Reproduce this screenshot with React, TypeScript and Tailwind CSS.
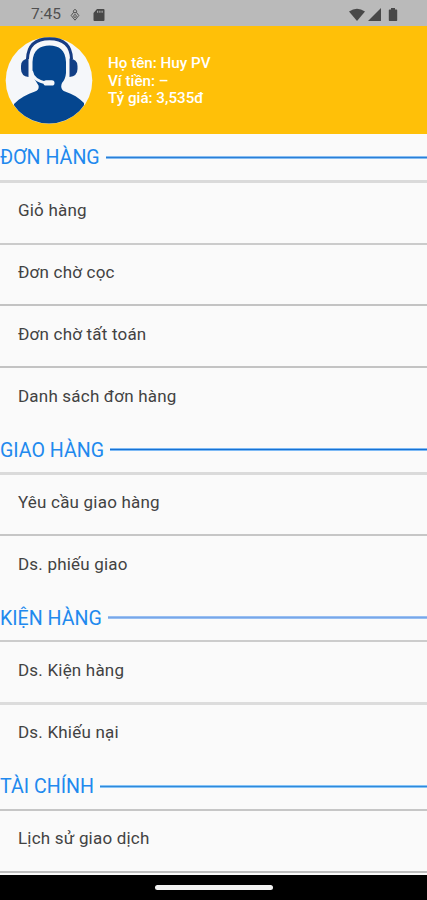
type Item = { label: string; className: string };
type Section = { title: string; titleClass: string; lineClass: string; items: Item[] };

const sections: Section[] = [
  {
    title: "ĐƠN HÀNG",
    titleClass: "h-[46px] pt-px w-[100px]",
    lineClass: "bg-[#2b7fd6] border-[#86bdf2]",
    items: [
      { label: "Giỏ hàng", className: "h-[63px] border-t-3 pt-[15px] border-[#dadada]" },
      { label: "Đơn chờ cọc", className: "h-[61px] border-t-2 pt-[15px] border-[#cbcbcb]" },
      { label: "Đơn chờ tất toán", className: "h-[62px] border-t-2 pt-[16px] border-[#c3c3c3]" },
      { label: "Danh sách đơn hàng", className: "h-[62px] border-t-2 pt-[16px] border-[#c3c3c3]" },
    ],
  },
  {
    title: "GIAO HÀNG",
    titleClass: "h-[44px] pt-px w-[104px]",
    lineClass: "mb-px bg-[#1771d2] border-[#7ebaf5]",
    items: [
      { label: "Yêu cầu giao hàng", className: "h-[62px] border-t-3 pt-[15px] border-[#dadada]" },
      { label: "Ds. phiếu giao", className: "h-[62px] border-t-2 pt-[16px] border-[#c6c6c6]" },
    ],
  },
  {
    title: "KIỆN HÀNG",
    titleClass: "h-[44px] pt-px w-[102px]",
    lineClass: "mb-px bg-[#78a6e8] border-[#98bff2]",
    items: [
      { label: "Ds. Kiện hàng", className: "h-[62px] border-t-2 pt-[16px] border-[#cccccc]" },
      { label: "Ds. Khiếu nại", className: "h-[62px] border-t-3 pt-[15px] border-[#dcdcdc]" },
    ],
  },
  {
    title: "TÀI CHÍNH",
    titleClass: "h-[45px] w-[94px]",
    lineClass: "mb-px bg-[#2f89da] border-[#86c4f7]",
    items: [{ label: "Lịch sử giao dịch", className: "h-[62px] border-t-2 pt-[15px] border-[#c6c6c6]" }],
  },
];

function StatusBar() {
  return (
    <div className="flex h-[26px] shrink-0 items-center bg-[#bababa] pt-[3px] pl-[31px] text-[#505050]">
      <span className="w-[30px] text-[15.5px] leading-none whitespace-nowrap">7:45</span>
      <svg className="ml-[9px]" width="10" height="14" viewBox="0 0 10 14" fill="none" stroke="currentColor" strokeWidth="1">
        <path d="M5 1.200 6.800 3.200 5 5.200 3.200 3.200ZM3.700 4.200 1.200 7.500 5 12.200 8.800 7.500 6.300 4.200" />
        <path d="M5 6.200 6.500 8 5 9.800 3.500 8Z" />
      </svg>
      <svg className="ml-[13px]" width="12" height="14" viewBox="0 0 12 14" fill="#484848">
        <path fillRule="evenodd" d="M4 1h6.5q1 0 1 1v10q0 1-1 1h-9q-1 0-1-1V5Zm.2 1.7v2h1v-2Zm2.2 0v2h1v-2Zm2.2 0v2h1v-2Z" />
      </svg>
      <div className="mr-[29px] ml-auto flex items-center gap-[3px] text-[#484848]">
        <svg width="16" height="14" viewBox="0 0 16 14" fill="currentColor">
          <path d="M0 3.5Q8-2 16 3.5L8 13Z" />
        </svg>
        <svg width="13" height="14" viewBox="0 0 13 14" fill="currentColor">
          <path d="M13 0v13H0Z" />
        </svg>
        <svg className="ml-[4px]" width="10" height="14" viewBox="0 0 10 14" fill="currentColor">
          <path d="M3 0h4v1.500h1.500q.7 0 .7.7v10.100q0 .7-.7.7h-7q-.7 0-.7-.7V2.200q0-.7.7-.7H3Z" />
        </svg>
      </div>
    </div>
  );
}

function Avatar() {
  return (
    <svg width="88" height="88" viewBox="0 0 88 88" className="shrink-0">
      <defs>
        <clipPath id="avatar-circle">
          <circle cx="44" cy="43.500" r="43" />
        </clipPath>
      </defs>
      <circle cx="44" cy="43.500" r="43.300" fill="#f5f7fa" />
      <g clipPath="url(#avatar-circle)" fill="#05468f">
        <path d="M27.500 25C28 13 35 8.500 44.500 8.500S60.500 13 61 25V36Q60.500 42 57 46Q54.500 52 60 54.500C68 57 74 61 79 66V88H9V67C15 61 22 57 30 54.500Q34.500 53 33.500 48.500L29.500 42Q27.500 38 27.500 34Z" />
      </g>
      <path d="M22.500 22C23 7 32 1.800 44.500 1.800S66 7 66.500 22" fill="none" stroke="#163c83" strokeWidth="3" />
      <path d="M23.500 21.500v18.500q-7.500-1-7.500-8v-3q0-7 7.500-7.500ZM64.500 21.500v18.500q8-1 8-8v-3q0-7-8-7.500Z" fill="#123f86" />
      <path d="M26.500 34Q28 43.500 41 46" fill="none" stroke="#f5f7fa" strokeWidth="2.800" />
      <rect x="38.500" y="43.200" width="11" height="5.300" rx="2.600" fill="#f5f7fa" />
    </svg>
  );
}

function ProfileHeader() {
  return (
    <header className="flex h-[108px] shrink-0 bg-[#ffc008] pt-[11px] pl-[5px] text-white">
      <Avatar />
      <div className="mt-[18px] ml-[15px] text-[15.2px] leading-[17.5px] font-medium whitespace-nowrap">
        <p>Họ tên: Huy PV</p>
        <p>Ví tiền: –</p>
        <p>Tỷ giá: 3,535đ</p>
      </div>
    </header>
  );
}

export default function App() {
  return (
    <div className="flex h-[900px] w-[427px] flex-col overflow-hidden bg-[#fafafa] font-[Roboto,sans-serif]">
      <StatusBar />
      <ProfileHeader />
      <main className="flex-1 overflow-hidden">
        {sections.map((section) => (
          <section key={section.title}>
            <div className="flex items-center">
              <h2 className={`flex shrink-0 items-center text-[19.6px] font-normal whitespace-nowrap text-[#2189ee] ${section.titleClass}`}>
                {section.title}
              </h2>
              <div className={`ml-[6px] h-[3px] flex-1 border-y ${section.lineClass}`} />
            </div>
            {section.items.map((item) => (
              <div key={item.label} className={`pl-[18px] text-[17px] leading-6 tracking-[0.2px] text-[#424242] ${item.className}`}>
                {item.label}
              </div>
            ))}
          </section>
        ))}
        <div className="h-[2px] bg-[#bdbdbd]" />
      </main>
      <footer className="flex h-[25px] shrink-0 justify-center bg-black pt-[10px]">
        <div className="h-[5px] w-[118px] rounded-full bg-[#f2f2f2]" />
      </footer>
    </div>
  );
}
